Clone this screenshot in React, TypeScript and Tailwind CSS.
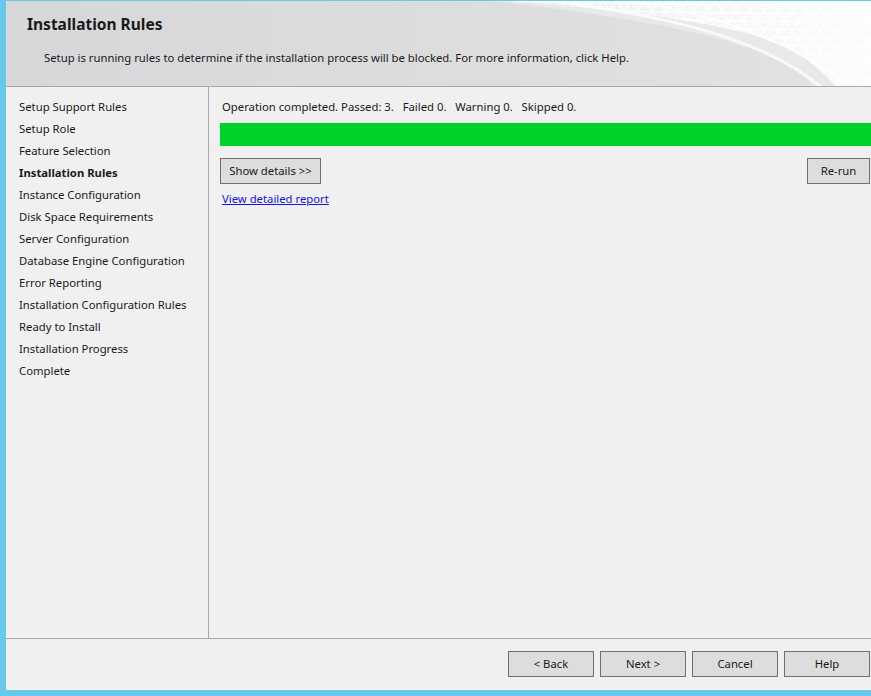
const steps = [
  "Setup Support Rules",
  "Setup Role",
  "Feature Selection",
  "Installation Rules",
  "Instance Configuration",
  "Disk Space Requirements",
  "Server Configuration",
  "Database Engine Configuration",
  "Error Reporting",
  "Installation Configuration Rules",
  "Ready to Install",
  "Installation Progress",
  "Complete",
];

const current = "Installation Rules";

function HeaderMesh() {
  // white lattice sweeping across the top-right corner of the banner
  const lines: JSX.Element[] = [];
  for (let i = -20; i < 40; i++) {
    const x = i * 14;
    lines.push(<line key={"a" + i} x1={x} y1={0} x2={x + 60} y2={86} />);
    lines.push(<line key={"b" + i} x1={x} y1={0} x2={x - 60} y2={86} />);
  }
  for (let j = 0; j < 12; j++) {
    const y = j * 8;
    lines.push(<line key={"h" + j} x1={0} y1={y} x2={380} y2={y + 6} />);
  }
  return (
    <svg className="absolute right-0 top-0" width="380" height="86" viewBox="0 0 380 86">
      <defs>
        <linearGradient id="band" x1="0" y1="0" x2="1" y2="0">
          <stop offset="0" stopColor="#ffffff" stopOpacity="0.2" />
          <stop offset="0.5" stopColor="#ffffff" stopOpacity="0.6" />
          <stop offset="1" stopColor="#ffffff" stopOpacity="0.85" />
        </linearGradient>
        <clipPath id="meshClip">
          <path d="M20,0 C120,8 250,22 300,48 C320,60 335,74 345,86 L380,86 L380,0 Z" />
        </clipPath>
      </defs>
      <path d="M0,0 C110,12 230,30 290,60 C305,68 315,76 322,86 L380,86 L380,0 Z" fill="#e9e9e9" />
      <path d="M20,0 C120,8 250,22 300,48 C320,60 335,74 345,86 L380,86 L380,0 Z" fill="url(#band)" />
      <g clipPath="url(#meshClip)" stroke="#ffffff" strokeWidth="1.2" opacity="0.95">
        {lines}
      </g>
      <path d="M60,0 C170,14 270,36 330,86" fill="none" stroke="#ffffff" strokeWidth="3" opacity="0.7" />
      <path d="M140,0 C220,12 300,40 360,86" fill="none" stroke="#ffffff" strokeWidth="2" opacity="0.7" />
    </svg>
  );
}

function Btn({ label, className }: { label: string; className: string }) {
  return (
    <button
      className={`h-[26px] border border-[#707070] bg-[#dddddd] text-[11.3px] text-[#1a1a1a] ${className}`}
    >
      {label}
    </button>
  );
}

export default function App() {
  return (
    <div
      className="w-[871px] h-[696px] bg-[#66c9ea] pl-[6px] pt-[1px] pb-[6px] flex flex-col overflow-hidden text-[#1a1a1a]"
      style={{ fontFamily: '"Noto Sans", "Liberation Sans", sans-serif' }}
    >
      <div className="flex-1 flex flex-col bg-[#f0f0f0] min-h-0">
        <header className="relative h-[86px] shrink-0 border-b border-[#a7a7af] bg-gradient-to-r from-[#d7d7d9] to-[#e2e2e2] overflow-hidden">
          <HeaderMesh />
          <div className="relative pl-[21px] pt-[11px]">
            <h1 className="text-[15.5px] font-bold leading-[24px]">Installation Rules</h1>
            <p className="ml-[17px] mt-[14px] text-[11.3px] leading-[16px]">
              Setup is running rules to determine if the installation process will be blocked. For more information, click Help.
            </p>
          </div>
        </header>

        <div className="flex-1 flex min-h-0">
          <nav className="w-[203px] shrink-0 border-r border-[#a7a7af] pt-[9px] pl-[13px]">
            {steps.map((s) => (
              <div
                key={s}
                className={`h-[22px] leading-[22px] text-[11.3px] ${s === current ? "font-bold" : ""}`}
              >
                {s}
              </div>
            ))}
          </nav>

          <main className="flex-1 pl-[11px] pt-[12px] flex flex-col">
            <div className="ml-[2px] text-[11.3px] leading-[16px] whitespace-pre">
              {"Operation completed. Passed: 3.   Failed 0.   Warning 0.   Skipped 0."}
            </div>
            <div className="mt-[8px] h-[23px] bg-[#00d22a]" />
            <div className="mt-[12px] flex justify-between pr-[1px]">
              <Btn label="Show details >>" className="w-[101px]" />
              <Btn label="Re-run" className="w-[63px]" />
            </div>
            <a className="mt-[7px] ml-[2px] text-[11.3px] leading-[16px] text-[#1414e6] underline w-fit cursor-pointer">
              View detailed report
            </a>
          </main>
        </div>

        <footer className="h-[52px] shrink-0 border-t border-[#a7a7af] flex justify-end gap-[6px] pt-[12px] pr-[1px]">
          <Btn label="< Back" className="w-[86px]" />
          <Btn label="Next >" className="w-[86px]" />
          <Btn label="Cancel" className="w-[86px]" />
          <Btn label="Help" className="w-[86px]" />
        </footer>
      </div>
    </div>
  );
}
